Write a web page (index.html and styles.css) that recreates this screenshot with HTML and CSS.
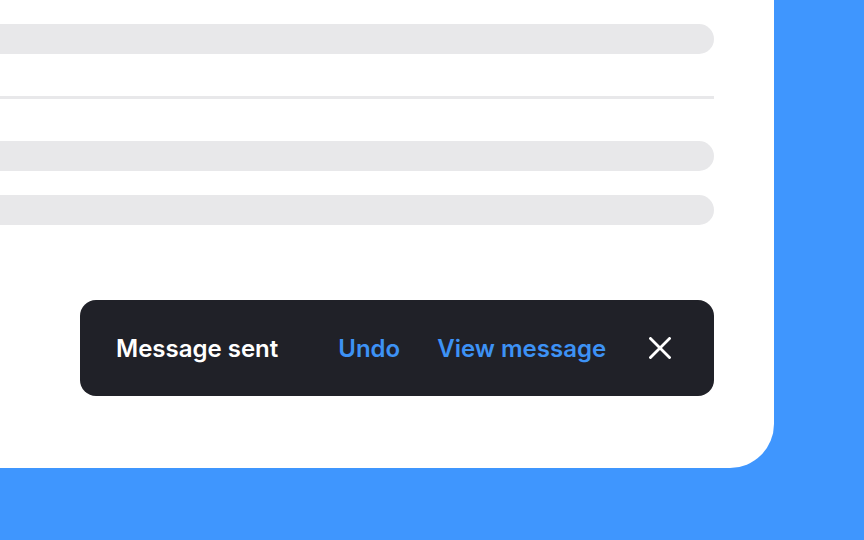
FILE: index.html
```html
<!DOCTYPE html>
<html lang="en">

<head>
    <meta charset="UTF-8">
    <meta name="viewport" content="width=device-width, initial-scale=1.0">
    <title>Snackbar</title>
    <link rel="stylesheet" href="styles.css">
</head>

<body>

    <main class="card">
        <div class="bar"></div>
        <hr class="divider">
        <div class="bar bar-second"></div>
        <div class="bar"></div>

        <div class="snackbar">
            <span class="snackbar-text">Message sent</span>
            <button class="snackbar-action action-undo">Undo</button>
            <button class="snackbar-action">View message</button>
            <button class="snackbar-close" aria-label="Close">
                <svg width="22" height="22" viewBox="0 0 22 22">
                    <path d="M1.5 1.5 L20.5 20.5 M20.5 1.5 L1.5 20.5" stroke="#fff" stroke-width="2.8" stroke-linecap="square" fill="none"/>
                </svg>
            </button>
        </div>
    </main>

</body>

</html>
```

FILE: styles.css
```css
body {
    font-family: 'Inter', 'Noto Sans', sans-serif;
    background-color: #3f96fe;
    margin: 0;
    padding: 0;
    height: 100vh;
    overflow: hidden;
}

.card {
    width: 774px;
    height: 468px;
    box-sizing: border-box;
    background-color: #fff;
    border-radius: 0 0 44px 0;
    padding: 24px 60px 0 0;
    display: flex;
    flex-direction: column;
}

.bar {
    height: 30px;
    background-color: #e8e8ea;
    border-radius: 0 15px 15px 0;
    margin-bottom: 24px;
}

.bar-second {
    margin-top: 42px;
}

.divider {
    height: 3px;
    margin: 18px 0 0;
    border: none;
    background-color: #e8e8ea;
}

.snackbar {
    margin: 51px 0 0 80px;
    height: 96px;
    box-sizing: border-box;
    background-color: #202128;
    border-radius: 16px;
    padding: 0 43px 0 36px;
    display: flex;
    align-items: center;
}

.snackbar-text {
    color: #fff;
    font-size: 24px;
    font-weight: 600;
    margin-right: 60px;
}

.snackbar-action {
    font-family: inherit;
    font-size: 24px;
    font-weight: 600;
    color: #3d92f5;
    background: none;
    border: none;
    padding: 0;
    cursor: pointer;
}

.action-undo {
    margin-right: 37px;
}

.snackbar-close {
    margin-left: auto;
    background: none;
    border: none;
    padding: 0;
    display: flex;
    cursor: pointer;
}
```
